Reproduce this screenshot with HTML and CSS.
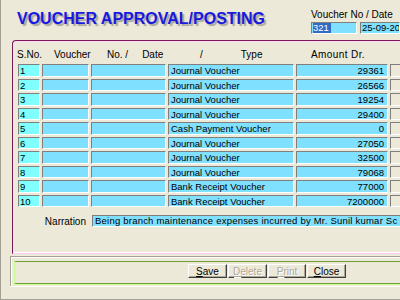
FILE: index.html
```html
<!DOCTYPE html>
<html>
<head>
<meta charset="utf-8">
<link rel="stylesheet" href="styles.css">
</head>
<body>
<div class="app">
  <div class="top">
    <h1 class="title">VOUCHER APPROVAL/POSTING</h1>
    <div class="vno">
      <div class="vno-label">Voucher No / Date</div>
      <div class="vno-fields">
        <div class="field f-no"><span class="sel">321</span></div>
        <div class="field f-date">25-09-20</div>
      </div>
    </div>
  </div>

  <div class="panel">
    <div class="thead">
      <div class="th"><span class="h-sno">S.No.</span></div>
      <div class="th"><span class="h-vch">Voucher</span></div>
      <div class="th"><span class="h-no">No. /</span><span class="h-date">Date</span></div>
      <div class="th"><span class="h-sl">/</span><span class="h-type">Type</span></div>
      <div class="th"><span class="h-amt">Amount Dr.</span></div>
      <div class="th"></div>
    </div>

    <div class="grid">
      <div class="c sno">1</div><div class="c"></div><div class="c"></div><div class="c">Journal Voucher</div><div class="c amt">29361</div><div class="c last"></div>
      <div class="c sno">2</div><div class="c"></div><div class="c"></div><div class="c">Journal Voucher</div><div class="c amt">26566</div><div class="c last"></div>
      <div class="c sno">3</div><div class="c"></div><div class="c"></div><div class="c">Journal Voucher</div><div class="c amt">19254</div><div class="c last"></div>
      <div class="c sno">4</div><div class="c"></div><div class="c"></div><div class="c">Journal Voucher</div><div class="c amt">29400</div><div class="c last"></div>
      <div class="c sno">5</div><div class="c"></div><div class="c"></div><div class="c">Cash Payment Voucher</div><div class="c amt">0</div><div class="c last"></div>
      <div class="c sno">6</div><div class="c"></div><div class="c"></div><div class="c">Journal Voucher</div><div class="c amt">27050</div><div class="c last"></div>
      <div class="c sno">7</div><div class="c"></div><div class="c"></div><div class="c">Journal Voucher</div><div class="c amt">32500</div><div class="c last"></div>
      <div class="c sno">8</div><div class="c"></div><div class="c"></div><div class="c">Journal Voucher</div><div class="c amt">79068</div><div class="c last"></div>
      <div class="c sno">9</div><div class="c"></div><div class="c"></div><div class="c">Bank Receipt Voucher</div><div class="c amt">77000</div><div class="c last"></div>
      <div class="c sno">10</div><div class="c"></div><div class="c"></div><div class="c">Bank Receipt Voucher</div><div class="c amt">7200000</div><div class="c last"></div>
    </div>

    <div class="narr">
      <div class="narr-label">Narration</div>
      <div class="narr-field">Being branch maintenance expenses incurred by Mr. Sunil kumar Sc</div>
    </div>
  </div>

  <div class="footer">
    <div class="greenbox">
      <div class="btns">
        <button class="btn"><u>S</u>ave</button>
        <button class="btn" disabled><u>D</u>elete</button>
        <button class="btn" disabled><u>P</u>rint</button>
        <button class="btn"><u>C</u>lose</button>
      </div>
    </div>
  </div>
</div>
</body>
</html>
```

FILE: styles.css
```css
* { box-sizing: border-box; }
html, body { margin: 0; padding: 0; }
body {
  width: 400px;
  height: 300px;
  overflow: hidden;
  background: #ece9d8;
  font-family: "Liberation Sans", Arial, sans-serif;
  color: #000;
}
.app {
  width: 400px;
  height: 300px;
  border-left: 1px solid #a3a196;
  border-bottom: 1px solid #a3a196;
  background: #ece9d8;
  overflow: hidden;
  display: flex;
  flex-direction: column;
}

/* header */
.top {
  display: flex;
  height: 40px;
  flex: none;
}
.title {
  margin: 10px 0 0 16px;
  font-size: 16px;
  line-height: 18px;
  font-weight: bold;
  color: #1818e0;
  text-shadow: 2px 2px 1px #a8a69c;
  white-space: nowrap;
  height: 18px;
}
.vno {
  margin-left: auto;
  width: 89px;
  padding-top: 9px;
  flex: none;
}
.vno-label {
  font-size: 10px;
  line-height: 11px;
  white-space: nowrap;
  color: #000;
}
.vno-fields {
  display: flex;
  gap: 3px;
  margin-top: 2px;
}
.field {
  height: 12px;
  flex: none;
  background: #80e0ff;
  border-top: 1px solid #7f7f7f;
  border-left: 1px solid #7f7f7f;
  border-bottom: 1px solid #fff;
  border-right: 1px solid #fff;
  font-size: 9.5px;
  line-height: 10px;
  padding-left: 1px;
  white-space: nowrap;
  overflow: hidden;
}
.f-no { width: 46px; }
.f-date { width: 40px; }
.sel {
  background: #316ac5;
  color: #fff;
  padding: 0 2px 0 0;
}

/* group panel */
.panel {
  flex: none;
  margin-left: 11px;
  width: 420px;
  height: 214px;
  border-top: 1px solid #7a1a5a;
  border-left: 1px solid #7a1a5a;
  border-bottom: 1px solid #ffc8f4;
  border-top-left-radius: 4px;
  box-shadow: inset 1px 1px 0 #ffd8f6, 0 -1px 0 #fff inset;
  padding: 8px 0 0 5px;
}
.thead, .grid {
  display: grid;
  grid-template-columns: 22px 47px 75px 126px 92px 40px;
  column-gap: 2px;
}
.thead {
  height: 12px;
  font-size: 10px;
  line-height: 11px;
  white-space: nowrap;
}
.th { display: flex; }
.h-sno { margin-left: -1px; }
.h-vch { margin-left: 12px; }
.h-no { margin-left: 16px; }
.h-date { margin-left: 14px; }
.h-sl { margin-left: 32px; }
.h-type { margin-left: 38px; }
.h-amt { margin-left: 15px; letter-spacing: 0.4px; }

.grid {
  margin-top: 3px;
  grid-auto-rows: 12.5px;
  row-gap: 2px;
}
.c {
  background: #80e0ff;
  border-top: 1px solid #7f7f7f;
  border-left: 1px solid #7f7f7f;
  border-bottom: 1px solid #fff;
  border-right: 1px solid #fff;
  font-size: 9.5px;
  line-height: 10px;
  padding: 1px 0 0 2px;
  white-space: nowrap;
  overflow: hidden;
}
.c.sno { background: #80ffff; padding-left: 1px; }
.c.amt { text-align: right; padding-right: 3px; }
.c.last { background: #ece9d8; }

.narr {
  display: flex;
  align-items: center;
  margin-top: 8px;
  height: 12px;
}
.narr-label {
  width: 68px;
  text-align: right;
  font-size: 10px;
  line-height: 11px;
  white-space: nowrap;
}
.narr-field {
  margin-left: 6px;
  width: 309px;
  flex: none;
  height: 12px;
  background: #80e0ff;
  border-top: 1px solid #7f7f7f;
  border-left: 1px solid #7f7f7f;
  border-bottom: 1px solid #fff;
  font-size: 9.5px;
  letter-spacing: 0.22px;
  line-height: 10px;
  padding-left: 2px;
  white-space: nowrap;
  overflow: hidden;
}

/* footer */
.footer {
  flex: none;
  margin: 2px 0 0 9px;
  width: 400px;
  height: 30px;
  border-top: 1px solid #a3a196;
  border-left: 1px solid #a3a196;
  box-shadow: inset 1px 1px 0 #fff, 0 1px 0 #fff;
  padding: 4px 0 0 3px;
}
.greenbox {
  height: 23px;
  border-top: 1px solid #6b9e38;
  border-bottom: 1px solid #6b9e38;
  border-left: 2px solid #ccff99;
  box-shadow: 0 1px 0 #ccff99;
  padding: 2px 0 0 172px;
}
.btns {
  display: flex;
  gap: 1px;
}
.btn {
  height: 14px;
  width: 39px;
  padding: 0;
  margin: 0;
  background: #ece9d8;
  border: 1px solid;
  border-color: #fff #404040 #404040 #fff;
  box-shadow: inset -1px -1px 0 #aca899;
  font-family: "Liberation Sans", Arial, sans-serif;
  font-size: 10px;
  line-height: 11px;
  color: #000;
}
.btn:nth-child(3) { width: 38px; }
.btn u { text-decoration: underline; }
.btn:disabled {
  color: #aca899;
  text-shadow: 1px 1px 0 #fff;
}
```
